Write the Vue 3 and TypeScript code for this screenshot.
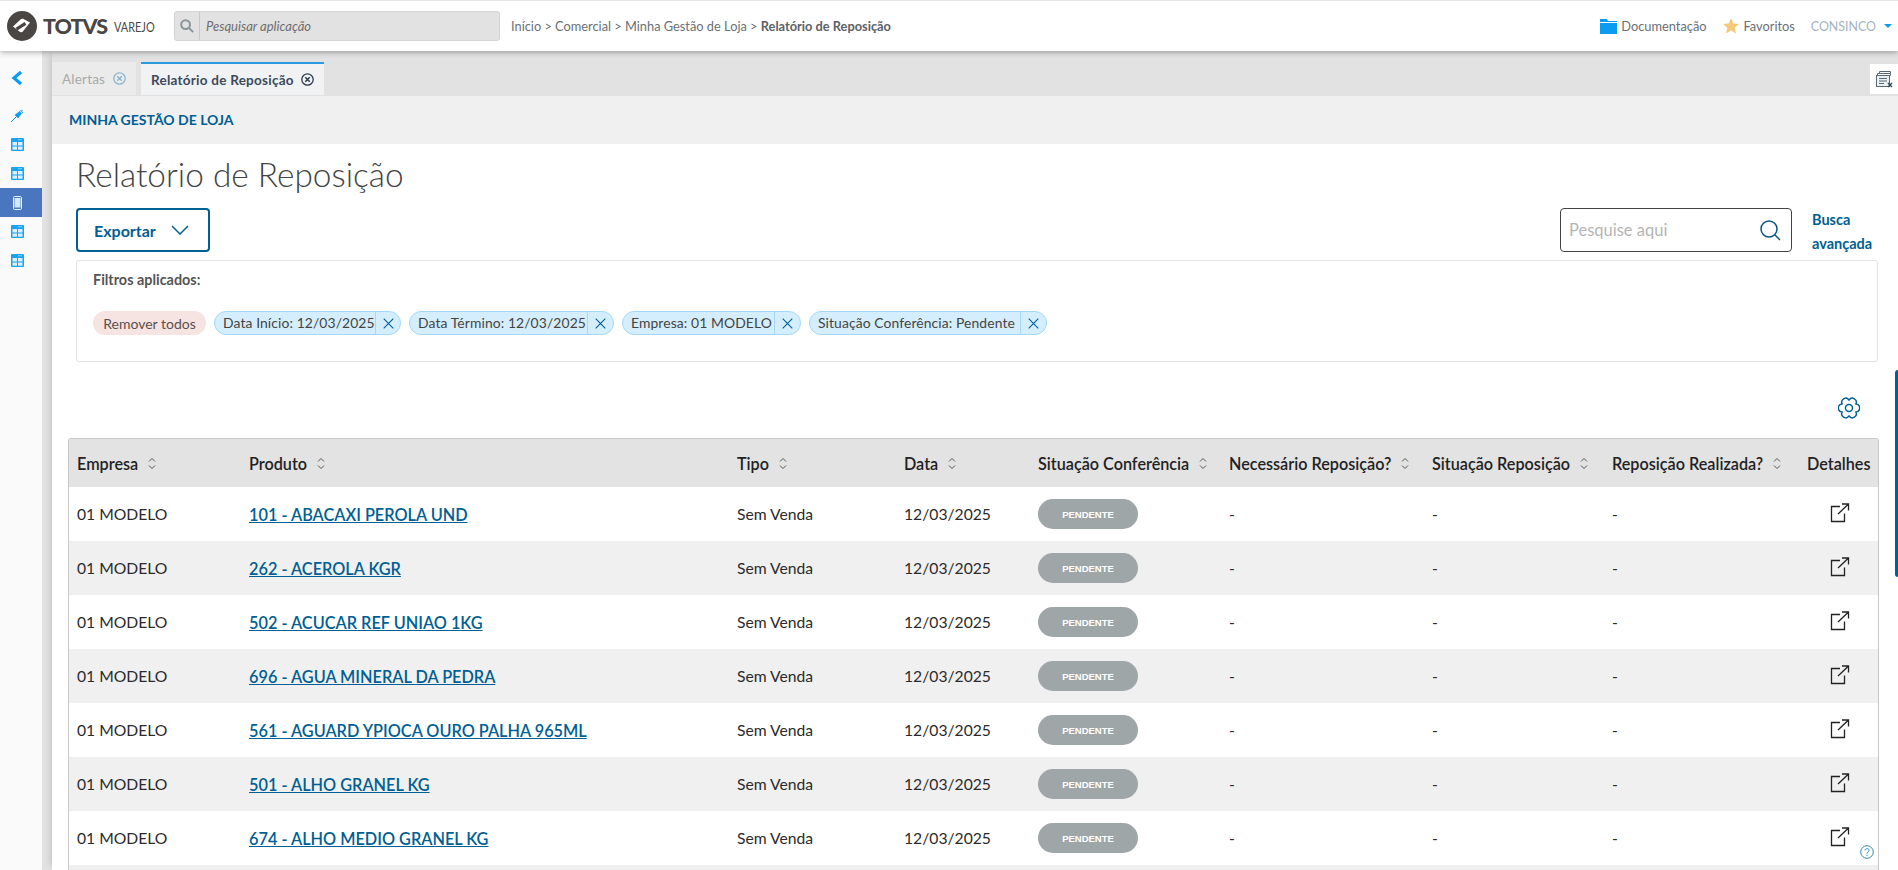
<script setup lang="ts">
interface Row { product: string; blank?: boolean }
const rows: Row[] = [
  { product: '101 - ABACAXI PEROLA UND' },
  { product: '262 - ACEROLA KGR' },
  { product: '502 - ACUCAR REF UNIAO 1KG' },
  { product: '696 - AGUA MINERAL DA PEDRA' },
  { product: '561 - AGUARD YPIOCA OURO PALHA 965ML' },
  { product: '501 - ALHO GRANEL KG' },
  { product: '674 - ALHO MEDIO GRANEL KG' },
  { product: '', blank: true },
]
const columns = [
  { label: 'Empresa', width: 172, sort: true },
  { label: 'Produto', width: 488, sort: true },
  { label: 'Tipo', width: 167, sort: true },
  { label: 'Data', width: 134, sort: true },
  { label: 'Situação Conferência', width: 191, sort: true },
  { label: 'Necessário Reposição?', width: 203, sort: true },
  { label: 'Situação Reposição', width: 180, sort: true },
  { label: 'Reposição Realizada?', width: 195, sort: true },
  { label: 'Detalhes', width: 79, sort: false },
]
const chips = [
  { label: 'Data Início: 12/03/2025', width: 187 },
  { label: 'Data Término: 12/03/2025', width: 205 },
  { label: 'Empresa: 01 MODELO', width: 179 },
  { label: 'Situação Conferência: Pendente', width: 238 },
]
const navTop = ['table', 'table', 'mobile', 'table', 'table']

function polar(angle: number, r: number): string {
  const t = (angle * Math.PI) / 180
  return `${(12 + r * Math.cos(t)).toFixed(2)} ${(12 + r * Math.sin(t)).toFixed(2)}`
}
let gearPath = `M${polar(-30, 8.6)}`
for (let k = 0; k < 6; k++) {
  const a = k * 60
  gearPath += ` C${polar(a - 17, 13.6)} ${polar(a + 17, 13.6)} ${polar(a + 30, 8.6)}`
}
gearPath += 'Z'
</script>

<template>
  <div class="app">
    <header class="topbar">
      <div class="brand">
        <svg class="logo" width="30" height="30" viewBox="0 0 30 30">
          <circle cx="15" cy="15" r="15" fill="#4a4644" />
          <path d="M6 15.500 13.800 8.300c.8-.7 1.800-.8 2.700-.4l6.500 3.600-7.200 8.900c-.7.800-1.800 1-2.700.5Z" fill="#fff" />
          <path d="M9.500 18.200 18.500 12.400" stroke="#4a4644" stroke-width="3.200" fill="none" />
        </svg>
        <span class="brand-name">TOTVS</span>
        <span class="brand-sub">VAREJO</span>
      </div>
      <div class="app-search">
        <span class="app-search-icon">
          <svg width="14" height="14" viewBox="0 0 14 14" fill="none" stroke="#8b9498" stroke-width="2"><circle cx="5.6" cy="5.6" r="4.4" /><path d="m8.900 8.900 4.200 4.200" /></svg>
        </span>
        <span class="app-search-text">Pesquisar aplicação</span>
      </div>
      <nav class="crumbs">Início &gt; Comercial &gt; Minha Gestão de Loja &gt; <b>Relatório de Reposição</b></nav>
      <div class="top-links">
        <svg width="17" height="15" viewBox="0 0 17 15" fill="#0a9cf0"><path d="M0 0h7l1 2h9v1H0Z" /><path d="M0 4h17v11H0Z" /></svg>
        <span class="doc">Documentação</span>
        <svg class="star" width="16" height="16" viewBox="0 0 16 16" fill="#f5c87a"><path d="m8 0 2.300 5.400 5.700.5-4.300 3.800 1.300 5.800L8 12.400l-5 3.100 1.300-5.800L0 5.900l5.700-.5Z" /></svg>
        <span class="fav">Favoritos</span>
        <span class="user">CONSINCO</span>
        <span class="caret"></span>
      </div>
    </header>

    <div class="body">
      <aside class="side">
        <div class="side-back">
          <svg width="12" height="14" viewBox="0 0 12 14" fill="none" stroke="#0a9cf0" stroke-width="3.200"><path d="M10 1 3 7l7 6" /></svg>
        </div>
        <div class="side-item">
          <svg width="14" height="14" viewBox="0 0 14 14" fill="none" stroke="#0a9cf0"><path d="M1 13 7 7" stroke-width="1" /><path d="m5 6 3 3 3.600-4.600-2-2Z" fill="#0a9cf0" stroke-width=".6" /><path d="M10 1.200 12.800 4M12 .8v1.600" stroke-width="1" /></svg>
        </div>
        <div v-for="(kind, i) in navTop" :key="i" class="side-item" :class="{ active: kind === 'mobile' }">
          <svg v-if="kind === 'table'" width="13" height="13" viewBox="0 0 13 13">
            <rect width="13" height="13" rx="1" fill="#1aa3f2" />
            <path d="M7.500 1.200h1v1h-1ZM9.500 1.200h1v1h-1Z" fill="#fff" />
            <path d="M1.500 4h4.500v3.600H1.500ZM7 4h4.500v3.600H7ZM1.500 8.500h4.500v3.200H1.500ZM7 8.500h4.500v3.200H7Z" fill="#d9f0fe" />
          </svg>
          <svg v-else width="9" height="14" viewBox="0 0 9 14">
            <rect x=".5" y=".5" width="8" height="13" rx="1.200" fill="#4a76c0" stroke="#e8f4fc" />
            <rect x="1.500" y="2" width="6" height="9.500" fill="#d2e9fa" />
          </svg>
        </div>
      </aside>

      <main class="main">
        <div class="tabs">
          <div class="tab">
            <span>Alertas</span>
            <svg width="13" height="13" viewBox="0 0 13 13" fill="none" stroke="#8fb6d0" stroke-width="1.300"><circle cx="6.500" cy="6.500" r="5.700" /><path d="m4.300 4.300 4.400 4.400m0-4.400L4.300 8.700" stroke-width="1.600" /></svg>
          </div>
          <div class="tab tab-active">
            <span>Relatório de Reposição</span>
            <svg width="13" height="13" viewBox="0 0 13 13" fill="none" stroke="#2e3e50" stroke-width="1.300"><circle cx="6.500" cy="6.500" r="5.700" /><path d="m4.300 4.300 4.400 4.400m0-4.400L4.300 8.700" stroke-width="1.600" /></svg>
          </div>
          <div class="tab-tool">
            <svg width="17" height="17" viewBox="0 0 17 17" fill="none" stroke="#5a6a74"><path d="M3.500 2.500v-2h11v2M1.500 4.500v-2h13v2" /><rect x=".5" y="4.500" width="13" height="11" fill="#e9eff3" /><path d="M3 7.500h8M3 10h8M3 12.500h5" /><path d="m12 12 4 4m0-4-4 4" stroke="#33475a" stroke-width="1.400" /></svg>
          </div>
        </div>

        <section class="panel">
          <div class="panel-head">MINHA GESTÃO DE LOJA</div>
          <div class="content">
            <h1 class="title">Relatório de Reposição</h1>
            <div class="actions">
              <button class="export">
                <span>Exportar</span>
                <svg width="18" height="10" viewBox="0 0 18 10" fill="none" stroke="#005f94" stroke-width="1.500"><path d="m1 1 8 8 8-8" /></svg>
              </button>
              <div class="search">
                <span class="search-text">Pesquise aqui</span>
                <svg width="21" height="21" viewBox="0 0 21 21" fill="none" stroke="#0b5480" stroke-width="1.500"><circle cx="9" cy="9" r="8" /><path d="m14.800 14.800 5.200 5.200" /></svg>
              </div>
              <a class="advanced">Busca<br />avançada</a>
            </div>

            <div class="filters">
              <div class="filters-title">Filtros aplicados:</div>
              <div class="chips">
                <span class="remove-all">Remover todos</span>
                <span v-for="c in chips" :key="c.label" class="chip" :style="{ width: c.width + 'px' }">
                  <span class="chip-text">{{ c.label }}</span>
                  <span class="chip-x">
                    <svg width="11" height="11" viewBox="0 0 11 11" fill="none" stroke="#005f94" stroke-width="1.100"><path d="m.7.7 9.600 9.600m0-9.600L.7 10.300" /></svg>
                  </span>
                </span>
              </div>
            </div>

            <div class="gear-row">
              <svg width="22" height="22" viewBox="0 0 24 24" fill="none" stroke="#005f94" stroke-width="1.600" stroke-linejoin="round"><circle cx="12" cy="12" r="3.800" /><path :d="gearPath" /></svg>
            </div>

            <table class="grid">
              <colgroup>
                <col v-for="c in columns" :key="c.label" :style="{ width: c.width + 'px' }" />
              </colgroup>
              <thead>
                <tr>
                  <th v-for="c in columns" :key="c.label">
                    <span class="th-in">
                      {{ c.label }}
                      <svg v-if="c.sort" class="sort" width="8" height="13" viewBox="0 0 8 13" fill="none" stroke="#555" stroke-width="1"><path d="m1 4.500 3-3 3 3M1 8.500l3 3 3-3" /></svg>
                    </span>
                  </th>
                </tr>
              </thead>
              <tbody>
                <tr v-for="(r, i) in rows" :key="i">
                  <template v-if="!r.blank">
                    <td>01 MODELO</td>
                    <td><a class="prod">{{ r.product }}</a></td>
                    <td>Sem Venda</td>
                    <td>12/03/2025</td>
                    <td><span class="pill">PENDENTE</span></td>
                    <td>-</td>
                    <td>-</td>
                    <td>-</td>
                    <td>
                      <svg class="ext" width="20" height="20" viewBox="0 0 20 20" fill="none" stroke="#222" stroke-width="1.300"><path d="M10 3.500H1.500v15h13V10.500" /><path d="M8 11 18 1.500M12 1h6.500v6.500" /></svg>
                    </td>
                  </template>
                  <td v-else colspan="9"></td>
                </tr>
              </tbody>
            </table>
          </div>
          <div class="side-tab"></div>
          <svg class="help" width="14" height="14" viewBox="0 0 14 14" fill="none" stroke="#2f86c0" stroke-width="1"><circle cx="7" cy="7" r="6.300" /><path d="M5 5.500C5 3 9 3 9 5.400c0 1.600-2 1.500-2 3.200" /><path d="M7 9.800v1.200" /></svg>
        </section>
      </main>
    </div>
  </div>
</template>

<style>
html, body { margin: 0; padding: 0; overflow: hidden; background: #fff; }
</style>

<style scoped>
.app { width: 1898px; height: 870px; overflow: hidden; display: flex; flex-direction: column; font-family: Lato, "Noto Sans", sans-serif; color: #333; }
.topbar { height: 50px; flex: none; display: flex; align-items: center; background: #fff; border-top: 1px solid #e2e5e8; box-shadow: 0 1px 6px rgba(0,0,0,.35); position: relative; z-index: 2; }
.brand { width: 174px; display: flex; align-items: center; flex: none; padding-left: 7px; box-sizing: border-box; }
.logo { flex: none; }
.brand-name { margin-left: 6px; font-size: 21.500px; font-weight: 900; color: #4a4644; letter-spacing: -1px; }
.brand-sub { margin-left: 7px; font-size: 14px; color: #4a4644; font-weight: 400; transform: scaleX(.78); transform-origin: left; }
.app-search { width: 326px; height: 30px; flex: none; display: flex; align-items: center; background: #e2e2e2; border: 1px solid #d4d4d4; border-radius: 3px; box-sizing: border-box; }
.app-search-icon { width: 24px; height: 28px; display: flex; align-items: center; justify-content: center; border-right: 1px solid #c8c8c8; flex: none; }
.app-search-text { margin-left: 6px; font-style: italic; font-size: 13px; color: #6e6e6e; }
.crumbs { margin-left: 11px; font-size: 12.800px; color: #6a7076; }
.crumbs b { font-weight: 700; color: #5c6167; }
.top-links { margin-left: auto; display: flex; align-items: center; font-size: 12.800px; color: #6a7076; padding-right: 6px; }
.doc { margin-left: 4px; }
.star { margin-left: 16px; }
.fav { margin-left: 5px; }
.user { margin-left: 16px; color: #a3b4c0; font-size: 12.400px; }
.caret { margin-left: 8px; border: 4px solid transparent; border-top: 4px solid #0a9cf0; border-bottom: 0; }
.body { flex: 1; min-height: 0; display: flex; background: #e2e2e2; }
.side { width: 42px; flex: none; background: #fafafa; display: flex; flex-direction: column; }
.side-back { height: 50px; display: flex; align-items: center; justify-content: center; padding: 4px 8px 0 0; box-sizing: border-box; }
.side-item { height: 29px; display: flex; align-items: center; justify-content: center; padding-right: 8px; box-sizing: border-box; }
.side-item.active { background: #4a76c0; }
.main { flex: 1; min-width: 0; display: flex; flex-direction: column; margin-left: 10px; box-shadow: -6px 0 6px -4px rgba(0,0,0,.12); }
.tabs { height: 45px; flex: none; padding-top: 11px; box-sizing: border-box; display: flex; align-items: flex-start; gap: 5px; position: relative; }
.tab { width: 84px; height: 33px; display: flex; align-items: center; justify-content: space-between; padding: 0 10px; background: #ebebeb; color: #a9a9a9; font-size: 13.500px; box-sizing: border-box; letter-spacing: .2px; }
.tab-active { width: 183px; background: #f0f2f4; border-top: 2px solid #2a9ae0; color: #3c4a5c; font-weight: 700; letter-spacing: .25px; }
.tab-tool { position: absolute; right: 0; top: 13px; width: 28px; height: 30px; background: #fff; display: flex; align-items: center; justify-content: center; }
.panel { flex: 1; min-height: 0; background: #fff; position: relative; }
.panel-head { height: 48px; background: #f0f0f0; display: flex; align-items: center; padding: 0 0 2px 17px; box-sizing: border-box; font-size: 14px; font-weight: 700; color: #005f94; }
.content { padding: 0 20px 0 24px; }
.title { margin: 0; height: 64px; display: flex; align-items: center; font-size: 33.400px; font-weight: 300; color: #444; padding-bottom: 4px; box-sizing: border-box; }
.actions { height: 44px; display: flex; align-items: center; }
.export { width: 134px; height: 44px; display: flex; align-items: center; gap: 15px; padding: 0 0 0 16px; background: #fff; border: 2px solid #005f94; border-radius: 4px; box-sizing: border-box; color: #005f94; font: 700 16px Lato, sans-serif; }
.search { margin-left: auto; width: 232px; height: 44px; display: flex; align-items: center; justify-content: space-between; padding: 0 10px 0 8px; border: 1px solid #444; border-radius: 4px; box-sizing: border-box; }
.search-text { font-size: 16.500px; color: #b5b5b5; }
.advanced { width: 66px; margin-left: 20px; padding-top: 4px; font-size: 14.500px; line-height: 24px; font-weight: 700; color: #005f94; }
.filters { height: 102px; margin-top: 8px; border: 1px solid #e4e4e4; border-radius: 3px; box-sizing: border-box; padding: 0 16px; }
.filters-title { margin-top: 10px; height: 18px; line-height: 18px; font-size: 14.400px; font-weight: 700; color: #555; }
.chips { margin-top: 22px; display: flex; gap: 8px; font-size: 13.900px; color: #444; }
.remove-all { height: 24px; width: 113px; display: flex; align-items: center; justify-content: center; border-radius: 12px; background: #f5e4e2; color: #5c4f4d; font-size: 14px; }
.chip { height: 24px; display: flex; border: 1px solid #a5d8f7; border-radius: 12px; background: #d4eefe; box-sizing: border-box; }
.chip-text { flex: 1; padding-left: 8px; line-height: 22px; letter-spacing: .1px; white-space: nowrap; }
.chip-x { width: 25px; flex: none; border-left: 1px solid #a5d8f7; display: flex; align-items: center; justify-content: center; }
.gear-row { height: 76px; display: flex; align-items: flex-end; justify-content: flex-end; padding: 0 18px 19px 0; box-sizing: border-box; }
.grid { width: 1810px; margin-left: -8px; border-collapse: separate; border-spacing: 0; table-layout: fixed; font-size: 15.700px; color: #2b2b2b; border-left: 1px solid #c8c8c8; border-right: 1px solid #c8c8c8; border-top: 1px solid #c8c8c8; border-radius: 3px 3px 0 0; box-sizing: border-box; }
.grid th { height: 48px; background: #e3e3e3; text-align: left; padding: 0 0 0 8px; font-size: 16.200px; font-weight: 600; color: #222; white-space: nowrap; }
.th-in { display: inline-flex; align-items: center; gap: 10px; }
.sort { flex: none; }
.grid td { height: 54px; padding: 0 0 0 8px; box-sizing: border-box; white-space: nowrap; }
.grid tbody tr:nth-child(even) td { background: #f0f0f0; }
.prod { color: #005f94; font-weight: 600; text-decoration: underline; font-size: 16.300px; }
.pill { width: 100px; height: 30px; display: flex; align-items: center; justify-content: center; border-radius: 15px; background: #9fa6a8; color: #fff; font: 700 9.500px "Liberation Sans", sans-serif; }
.ext { display: block; margin: -3px 0 0 23px; }
.side-tab { position: absolute; right: 0; top: 274px; width: 3px; height: 207px; background: #005f94; border-radius: 3px 0 0 3px; }
.help { position: absolute; right: 24px; top: 749px; }
</style>
